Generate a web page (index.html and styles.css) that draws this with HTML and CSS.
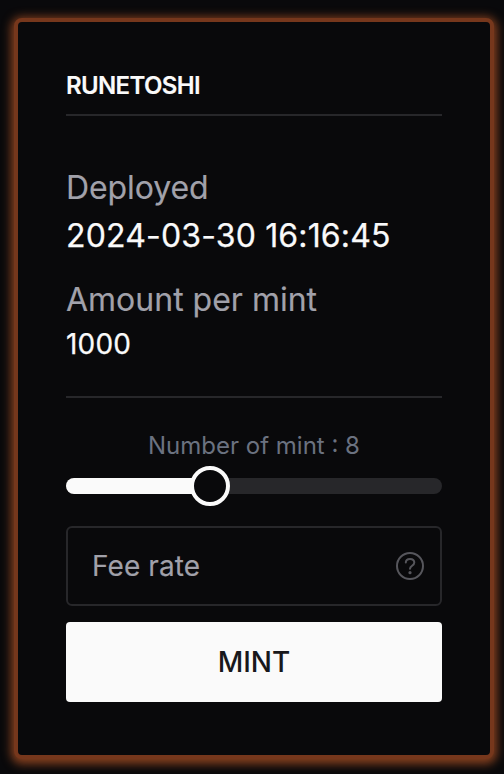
FILE: index.html
```html
<!DOCTYPE html>
<html lang="en">
<head>
<meta charset="utf-8">
<title>Mint</title>
<link rel="stylesheet" href="styles.css">
</head>
<body>
<main class="card">
  <h1 class="title">RUNETOSHI</h1>
  <section class="details">
    <div class="label deployed">Deployed</div>
    <div class="value date">2024-03-30 16:16:45</div>
    <div class="label amount-label">Amount per mint</div>
    <div class="value amount">1000</div>
  </section>
  <div class="count">Number of mint : 8</div>
  <div class="slider">
    <div class="range"></div>
    <div class="thumb"></div>
  </div>
  <div class="field">
    <span class="placeholder">Fee rate</span>
    <svg class="help" viewBox="0 0 28 28" fill="none" stroke="currentColor" stroke-width="2">
      <circle cx="14" cy="14" r="13"/>
      <path stroke-linecap="round" d="M9.8 10.6C9.8 8.2 11.6 6.9 14 6.9s4.3 1.4 4.3 3.7c0 3.2-4.3 3.2-4.3 6.2"/>
      <circle cx="14" cy="20.7" r="1.6" fill="currentColor" stroke="none"/>
    </svg>
  </div>
  <button class="mint">MINT</button>
</main>
</body>
</html>
```
FILE: styles.css
```css
* { box-sizing: border-box; }
body {
  margin: 0;
  height: 774px;
  padding: 18px 10px 15px 14px;
  overflow: hidden;
  background: #09090b;
  color: #fafafa;
  font-family: Inter, sans-serif;
}
.card {
  height: 741px;
  padding: 44px 48px;
  border: 4px solid #76371c;
  border-radius: 8px;
  background: #09090b;
  box-shadow: 0 2px 10px 3px #85401f;
}
.title {
  height: 50px;
  margin: 0;
  border-bottom: 2px solid #27272a;
  font-size: 24px;
  font-weight: 600;
  line-height: 39px;
  letter-spacing: -0.65px;
  -webkit-text-stroke: 0.15px currentColor;
}
.details {
  height: 282px;
  padding-top: 48px;
  border-bottom: 2px solid #27272a;
  white-space: nowrap;
  -webkit-text-stroke: 0.15px currentColor;
}
.label { color: #a1a1aa; font-size: 32px; line-height: 48px; }
.deployed { letter-spacing: -0.1px; }
.date { font-size: 32px; line-height: 48px; letter-spacing: 0.16px; -webkit-text-stroke-width: 0.25px; }
.amount-label { margin-top: 16px; }
.amount { font-size: 28px; line-height: 40px; letter-spacing: 0.2px; -webkit-text-stroke-width: 0.25px; }
.count {
  margin-top: 32px;
  color: #6b7280;
  font-size: 24px;
  line-height: 32px;
  text-align: center;
}
.slider {
  display: flex;
  align-items: center;
  height: 16px;
  margin-top: 16px;
  border-radius: 8px;
  background: #27272a;
}
.range { width: 128px; height: 16px; border-radius: 8px 0 0 8px; background: #fafafa; }
.thumb {
  flex: none;
  width: 40px;
  height: 40px;
  margin-left: -4px;
  border: 4px solid #fafafa;
  border-radius: 50%;
  background: #09090b;
}
.field {
  display: flex;
  align-items: center;
  justify-content: space-between;
  height: 80px;
  margin-top: 32px;
  padding: 0 16px 0 24px;
  border: 2px solid #27272a;
  border-radius: 6px;
  color: #a1a1aa;
  font-size: 28px;
}
.placeholder { letter-spacing: 0.1px; -webkit-text-stroke: 0.15px currentColor; }
.help { width: 28px; height: 28px; color: #56565c; }
.mint {
  display: block;
  width: 100%;
  height: 80px;
  margin-top: 16px;
  padding: 0;
  border: 0;
  border-radius: 4px;
  background: #fafafa;
  color: #18181b;
  font: 500 28px Inter, sans-serif;
}
```
